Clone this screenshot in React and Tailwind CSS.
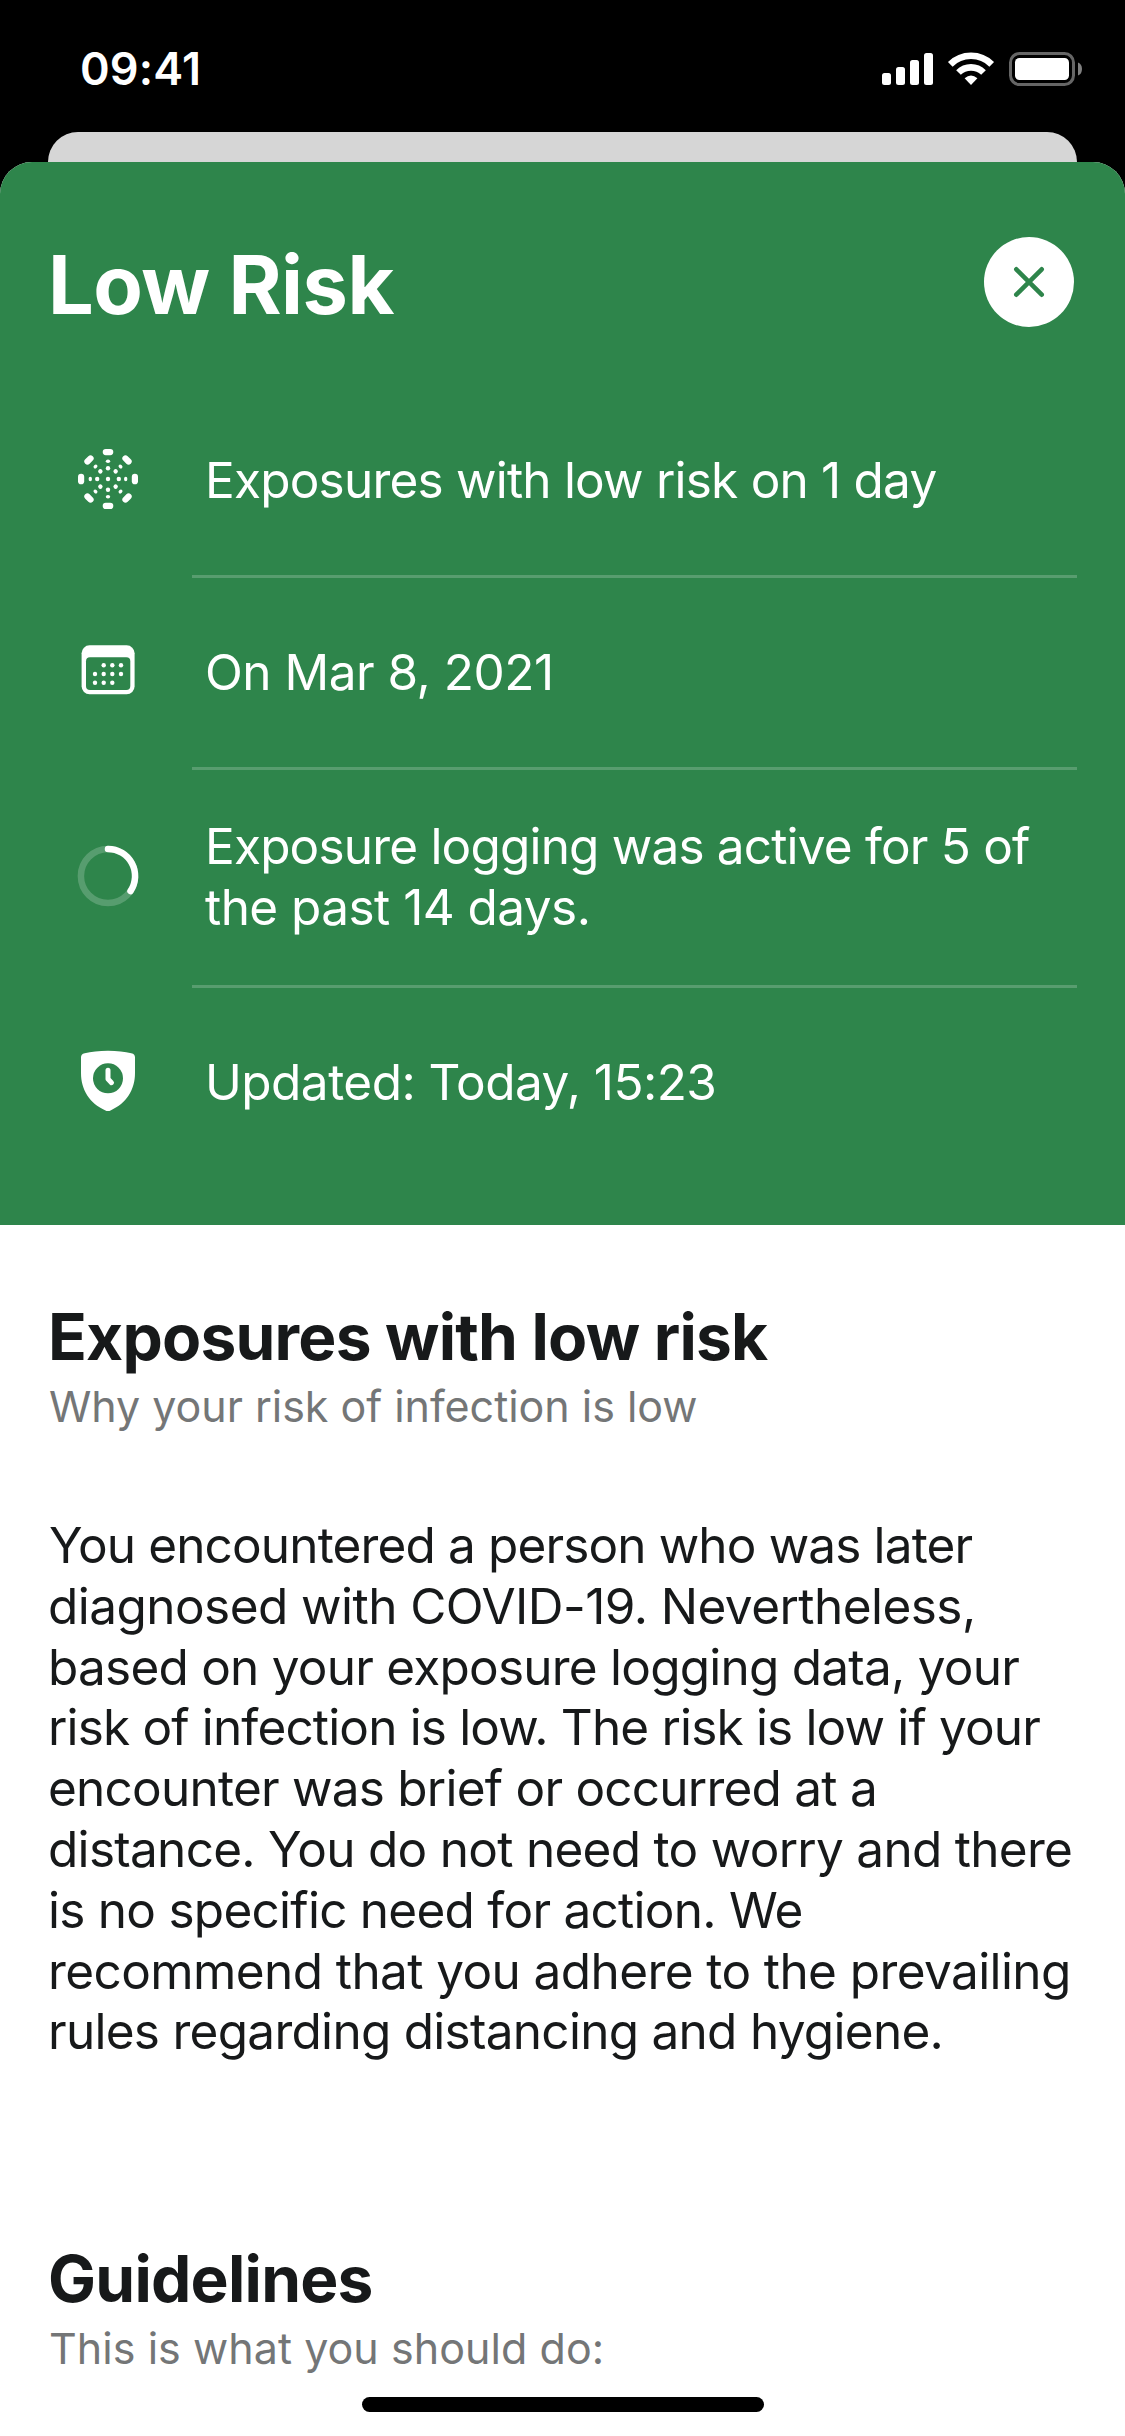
const ANGLES = [0, 45, 90, 135, 180, 225, 270, 315];

function StatusIcons() {
  return (
    <svg width="200" height="34" viewBox="0 0 200 34" fill="#fff">
      <rect x="0" y="21" width="9" height="12" rx="2.5" />
      <rect x="14" y="15" width="9" height="18" rx="2.5" />
      <rect x="28" y="8" width="9" height="25" rx="2.5" />
      <rect x="42" y="1" width="9" height="32" rx="2.5" />
      <g fill="none" stroke="#fff" strokeWidth="6.6">
        <path d="M68.3 12.3A29.3 29.3 0 0 1 109.7 12.3" />
        <path d="M76.5 20.5A17.7 17.7 0 0 1 101.5 20.5" />
      </g>
      <path d="M82.6 26.2Q89 20.6 95.4 26.2L89 33Z" />
      <rect x="128.5" y="1.5" width="63" height="31" rx="9" fill="none" stroke="#666" strokeWidth="3" />
      <rect x="133" y="6" width="54" height="22" rx="4.5" />
      <path d="M196 10.5Q200 12 200 17Q200 22 196 23.5Z" fill="#808080" />
    </svg>
  );
}

function ExposureIcon() {
  return (
    <svg width="66" height="66" viewBox="0 0 66 66" fill="#fff">
      <circle cx="33" cy="33" r="2.2" />
      {ANGLES.map((a) => (
        <g key={a} transform={`rotate(${a} 33 33)`}>
          <rect x="27.7" y="3" width="10.6" height="6.2" rx="3.1" />
          <ellipse cx="33" cy="15.3" rx="2.2" ry="1.7" />
          <circle cx="33" cy="22.2" r="2.2" />
        </g>
      ))}
    </svg>
  );
}

function CalendarIcon() {
  const dots = [
    [28.7, 27.3], [37.3, 27.3], [46, 27.3],
    [20, 36], [28.7, 36], [37.3, 36], [46, 36],
    [20, 44.7], [28.7, 44.7], [37.3, 44.7],
  ];
  return (
    <svg width="66" height="66" viewBox="0 0 66 66" fill="#fff">
      <rect x="6.6" y="7.3" width="53" height="49" rx="8" />
      <rect x="11" y="19.3" width="44.3" height="32.7" rx="4" fill="#2e854b" />
      {dots.map(([x, y]) => (
        <circle key={`${x}-${y}`} cx={x} cy={y} r="2.2" />
      ))}
    </svg>
  );
}

function ProgressIcon() {
  return (
    <svg width="66" height="66" viewBox="0 0 66 66" fill="none" strokeWidth="6.5">
      <circle cx="33" cy="33" r="27.1" stroke="#fff" strokeOpacity="0.2" />
      <path d="M33 5.9A27.1 27.1 0 0 1 55.5 48.1" stroke="#fff" strokeLinecap="round" />
    </svg>
  );
}

function ShieldClockIcon() {
  return (
    <svg width="66" height="66" viewBox="0 0 66 66">
      <path
        d="M33 2.8C42 2.8 50 3.9 56.3 5.3C59 5.9 60 7.2 60 9.5V25C60 42 51 55.5 36 62.2Q33 63.9 30 62.2C15 55.5 6 42 6 25V9.5C6 7.2 7 5.9 9.7 5.3C16 3.9 24 2.8 33 2.8Z"
        fill="#fff"
      />
      <circle cx="33" cy="30.3" r="15" fill="#2e854b" />
      <path d="M33 22.3V31L36.5 34.7" fill="none" stroke="#fff" strokeWidth="5" strokeLinecap="round" strokeLinejoin="round" />
    </svg>
  );
}

function Row({ icon, tall, last, children }) {
  return (
    <>
      <div className={`flex items-center pb-[3px] pl-[75px] ${tall ? "h-[215px]" : "h-[189px]"}`}>
        <div className="w-[130px] shrink-0">{icon}</div>
        <div className="pt-[2px] text-[49.5px] leading-[60.8px] whitespace-nowrap text-white">{children}</div>
      </div>
      {!last && <div className="mr-12 ml-[192px] h-[3px] bg-[#589d6f]" />}
    </>
  );
}

function Heading({ title, subtitle }) {
  return (
    <header className="whitespace-nowrap">
      {title}
      <div className="mt-[3px]">{subtitle}</div>
    </header>
  );
}

export default function App() {
  return (
    <div className="relative flex h-[2436px] w-[1125px] flex-col overflow-hidden bg-black font-['Inter',sans-serif]">
      <div className="flex h-[132px] shrink-0 items-start justify-between pt-[46px] pr-[43px] pl-20">
        <span className="text-[45px] leading-[45px] font-semibold tracking-[0.16px] text-white">09:41</span>
        <div className="pt-1.5">
          <StatusIcons />
        </div>
      </div>
      <div className="mx-12 h-[30px] shrink-0 rounded-t-[30px] bg-[#d6d6d6]" />

      <main className="flex grow flex-col overflow-hidden rounded-t-[32px] bg-white">
        <section className="shrink-0 bg-[#2e854b] pt-[75px] pb-12">
          <div className="mb-[59px] flex h-[90px] items-center justify-between pr-[51px] pl-12">
            <h1 className="pt-[5px] text-[81px] leading-[90px] font-bold tracking-[-0.5px] text-white">Low Risk</h1>
            <button className="flex size-[90px] items-center justify-center rounded-full bg-white" aria-label="Close">
              <svg width="32" height="32" viewBox="0 0 32 32" stroke="#2e854b" strokeWidth="4.6" strokeLinecap="round">
                <path d="M3.3 3.3L28.7 28.7M28.7 3.3L3.3 28.7" />
              </svg>
            </button>
          </div>
          <Row icon={<ExposureIcon />}>
            <p className="tracking-[-0.79px]">Exposures with low risk on 1 day</p>
          </Row>
          <Row icon={<CalendarIcon />}>
            <p className="tracking-[-0.5px]">On Mar 8, 2021</p>
          </Row>
          <Row icon={<ProgressIcon />} tall>
            <p>
              <span className="block tracking-[-0.82px]">Exposure logging was active for 5 of</span>
              <span className="block tracking-[-0.55px]">the past 14 days.</span>
            </p>
          </Row>
          <Row icon={<ShieldClockIcon />} last>
            <p className="tracking-[-0.53px]">Updated: Today, 15:23</p>
          </Row>
        </section>

        <section className="px-12 pt-[73px] text-[#17191a]">
          <Heading
            title={<h2 className="text-[64px] leading-[78px] font-bold tracking-[-0.78px]">Exposures with low risk</h2>}
            subtitle={<p className="pl-px text-[43px] leading-[54px] tracking-[-0.03px] text-[#747677]">Why your risk of infection is low</p>}
          />
          <p className="mt-[82px] text-[49.5px] leading-[60.8px] whitespace-nowrap">
            <span className="block pl-px tracking-[-0.86px]">You encountered a person who was later</span>
            <span className="block tracking-[-0.55px]">diagnosed with COVID-19. Nevertheless,</span>
            <span className="block tracking-[-0.77px]">based on your exposure logging data, your</span>
            <span className="block tracking-[-0.84px]">risk of infection is low. The risk is low if your</span>
            <span className="block tracking-[-0.77px]">encounter was brief or occurred at a</span>
            <span className="block tracking-[-0.71px]">distance. You do not need to worry and there</span>
            <span className="block tracking-[-0.74px]">is no specific need for action. We</span>
            <span className="block tracking-[-0.59px]">recommend that you adhere to the prevailing</span>
            <span className="block tracking-[-0.72px]">rules regarding distancing and hygiene.</span>
          </p>
          <div className="mt-[178px]">
            <Heading
              title={<h2 className="text-[64px] leading-[78px] font-bold tracking-[-0.75px]">Guidelines</h2>}
              subtitle={<p className="pl-px text-[43px] leading-[54px] tracking-[0.05px] text-[#747677]">This is what you should do:</p>}
            />
          </div>
        </section>
      </main>

      <div className="absolute bottom-6 left-[362px] h-[15px] w-[402px] rounded-full bg-black" />
    </div>
  );
}
